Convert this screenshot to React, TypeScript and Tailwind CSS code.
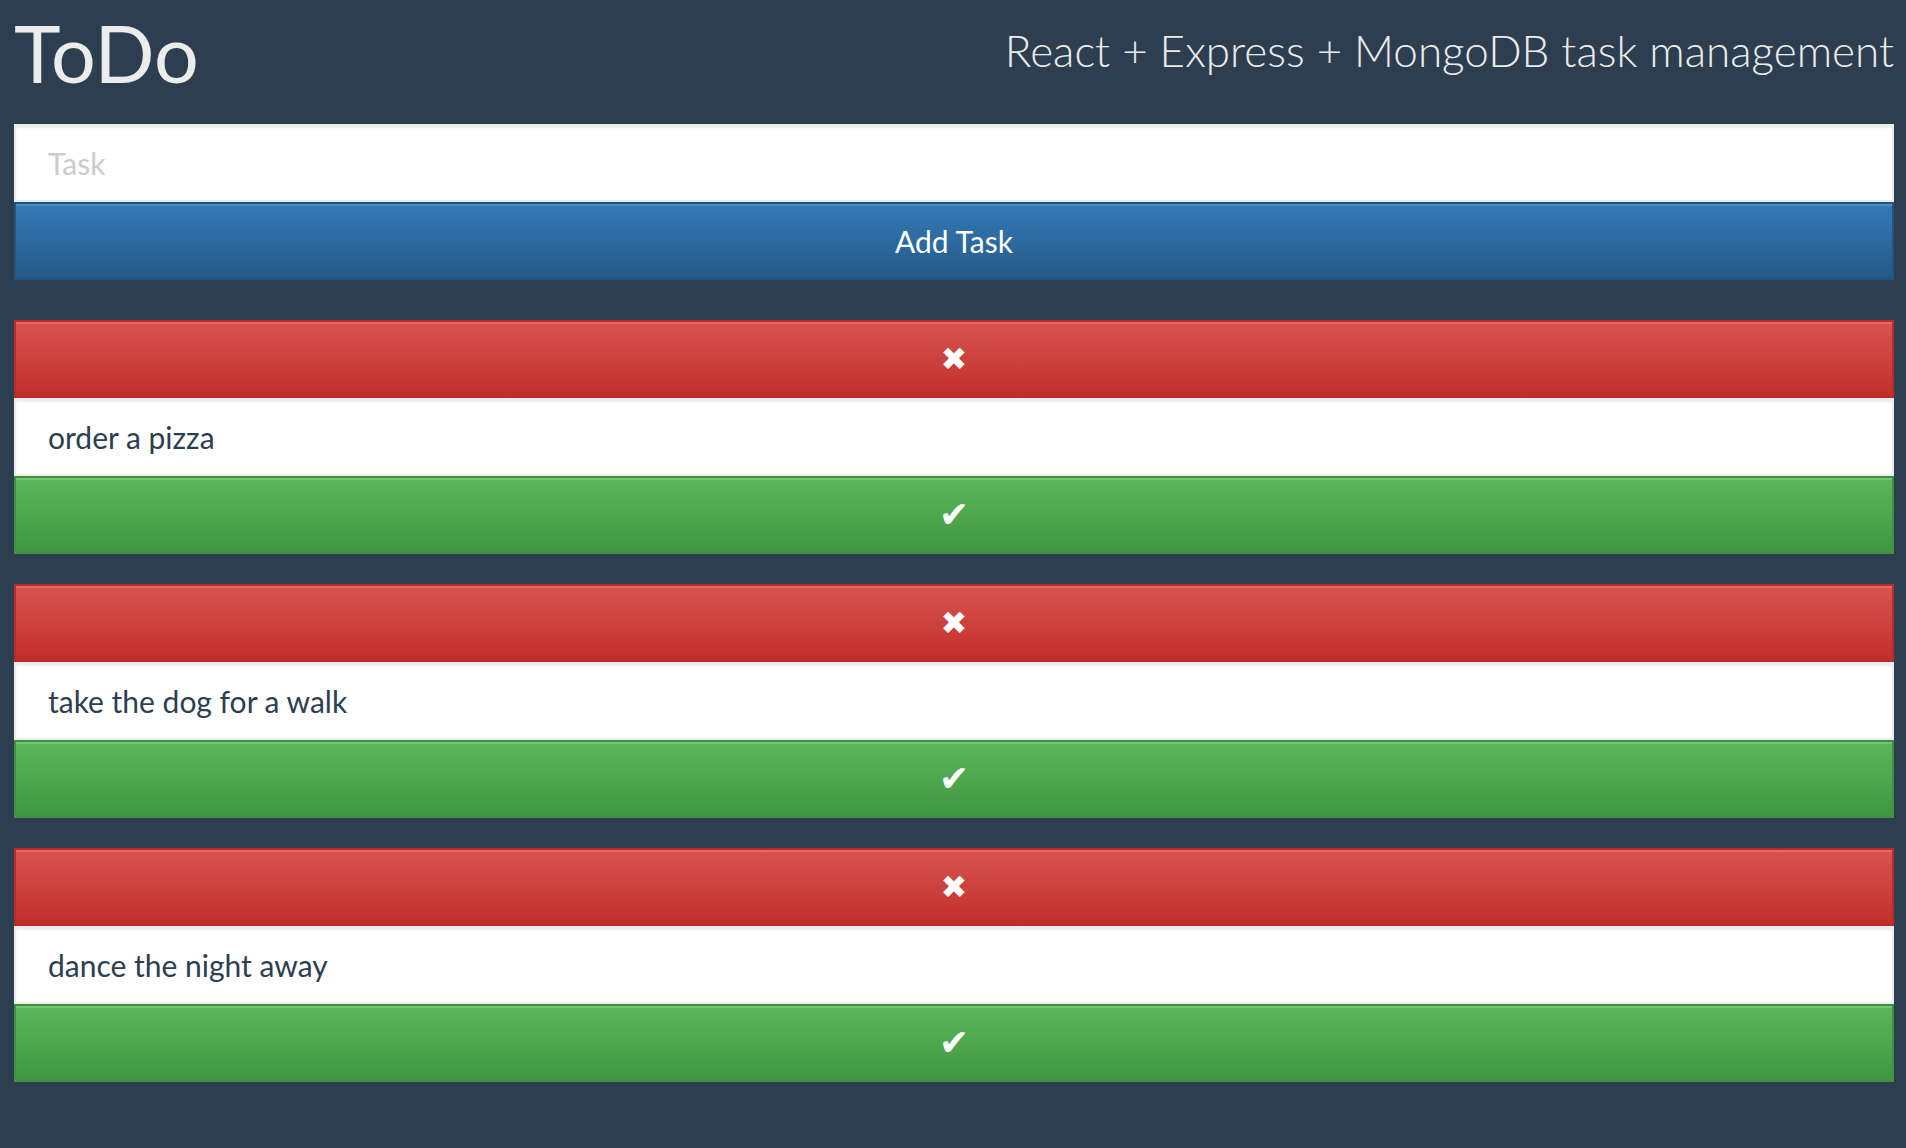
import { useState } from 'react';

type Task = {
  id: number;
  text: string;
};

const initialTasks: Task[] = [
  { id: 1, text: 'order a pizza' },
  { id: 2, text: 'take the dog for a walk' },
  { id: 3, text: 'dance the night away' },
];

const field =
  'block w-full h-[78px] bg-white border-2 border-[#ececec] shadow-[inset_0_2px_2px_rgba(0,0,0,0.075)] px-[32px] text-[30px] text-[#2c3e50] outline-none';

const btnBase =
  'flex w-full h-[78px] items-center justify-center border-2 text-white text-[30px] shadow-[inset_0_2px_0_rgba(255,255,255,0.15)]';

export default function App() {
  const [tasks, setTasks] = useState<Task[]>(initialTasks);
  const [draft, setDraft] = useState('');

  const addTask = () => {
    if (!draft.trim()) return;
    setTasks([...tasks, { id: Date.now(), text: draft.trim() }]);
    setDraft('');
  };

  const removeTask = (id: number) => {
    setTasks(tasks.filter((t) => t.id !== id));
  };

  return (
    <div className="min-h-screen bg-[#2c3e50] pl-[14px] pr-[12px] font-['Lato',sans-serif]">
      <header className="flex h-[124px] items-start justify-between">
        <h1 className="mt-[13px] text-[79px] leading-none font-normal text-[#ececec]">ToDo</h1>
        <h3 className="mt-[28px] text-[44px] leading-none font-light text-[#ececec]">
          React + Express + MongoDB task management
        </h3>
      </header>

      <input
        value={draft}
        onChange={(e) => setDraft(e.target.value)}
        placeholder="Task"
        className={`${field} placeholder:text-[#cccccc]`}
      />
      <button
        onClick={addTask}
        className={`${btnBase} border-[#245580] bg-linear-to-b from-[#337ab7] to-[#265a88]`}
      >
        Add Task
      </button>

      <ul className="mt-[40px] flex flex-col gap-[30px]">
        {tasks.map((t) => (
          <li key={t.id}>
            <button
              onClick={() => removeTask(t.id)}
              className={`${btnBase} border-[#b92c28] bg-linear-to-b from-[#d9534f] to-[#c12e2a]`}
            >
              <span className="font-['DejaVu_Sans',sans-serif] text-[32px] leading-none">✖</span>
            </button>
            <div className={`${field} flex items-center`}>{t.text}</div>
            <button
              onClick={() => removeTask(t.id)}
              className={`${btnBase} border-[#3e8f3e] bg-linear-to-b from-[#5cb85c] to-[#419641]`}
            >
              <span className="font-['DejaVu_Sans',sans-serif] text-[36px] leading-none">✔</span>
            </button>
          </li>
        ))}
      </ul>
    </div>
  );
}
